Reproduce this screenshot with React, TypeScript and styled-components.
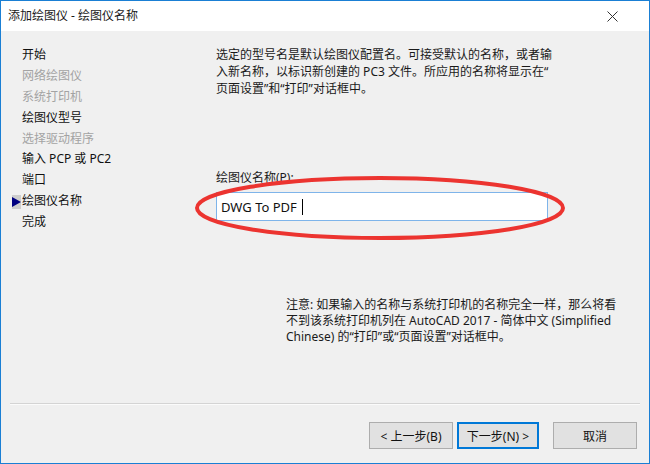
import React from "react";
import styled, { createGlobalStyle } from "styled-components";

const Global = createGlobalStyle`
  html, body { margin: 0; padding: 0; background: #ffffff; }
  #root { width: 650px; height: 464px; }
`;

const FONT = `"Noto Sans", "Noto Sans CJK SC", sans-serif`;

const Window = styled.div`
  position: relative;
  box-sizing: border-box;
  width: 650px;
  height: 464px;
  border: 1px solid #1a7fd4;
  background: #f0f0f0;
  display: flex;
  flex-direction: column;
  font-family: ${FONT};
  font-size: 12px;
  color: #000;
  overflow: hidden;
`;

const TitleBar = styled.div`
  height: 30px;
  background: #ffffff;
  display: flex;
  align-items: center;
  justify-content: space-between;
  padding: 0 31px 0 7px;
  flex-shrink: 0;
`;

const TitleText = styled.span`
  font-size: 12px;
  color: #1a1a1a;
  line-height: 16px;
`;

const CloseIcon = styled.svg`
  width: 11px;
  height: 11px;
  display: block;
`;

const Main = styled.div`
  flex: 1;
  display: flex;
`;

const StepList = styled.ul`
  list-style: none;
  margin: 0;
  padding: 14px 0 0 11px;
  width: 204px;
  box-sizing: border-box;
`;

const Step = styled.li<{ $disabled?: boolean }>`
  display: flex;
  align-items: center;
  height: 20.9px;
  line-height: 20.9px;
  color: ${(p) => (p.$disabled ? "#a3a3a3" : "#111")};
  white-space: nowrap;
`;

const Marker = styled.span<{ $active?: boolean }>`
  width: 9px;
  height: 14px;
  margin-right: 1px;
  display: flex;
  align-items: center;
  background: ${(p) => (p.$active ? "#cdcdcd" : "transparent")};
`;

const Arrow = styled.svg`
  width: 9px;
  height: 10px;
  display: block;
`;

const Content = styled.div`
  flex: 1;
  display: flex;
  flex-direction: column;
  padding: 15px 0 0 11px;
`;

const Description = styled.p`
  margin: 0;
  white-space: nowrap;
  line-height: 17px;
  color: #1a1a1a;
`;

const FieldLabel = styled.label`
  margin-top: 72px;
  line-height: 17px;
  color: #1a1a1a;
`;

const Input = styled.div`
  margin-top: 6px;
  box-sizing: border-box;
  width: 332px;
  height: 29px;
  border: 1px solid #7eb4ea;
  background: #fff;
  display: flex;
  align-items: center;
  padding-left: 4px;
  font-size: 13px;
  color: #111;
`;

const Caret = styled.span`
  display: inline-block;
  width: 1px;
  height: 16px;
  background: #000;
  margin-left: 5px;
`;

const Note = styled.p`
  margin: 76px 0 0 70px;
  width: 336px;
  line-height: 16px;
  color: #1a1a1a;
`;

const Footer = styled.div`
  flex-shrink: 0;
  padding: 0 9px 14px 9px;
`;

const Separator = styled.div`
  height: 1px;
  background: #d4d4d4;
  border-bottom: 1px solid #fbfbfb;
  margin-bottom: 17px;
`;

const ButtonRow = styled.div`
  display: flex;
  justify-content: flex-end;
  gap: 4px;
  padding-right: 3px;
`;

const Button = styled.button<{ $primary?: boolean; $gapLeft?: number }>`
  box-sizing: border-box;
  width: ${(p) => (p.$primary ? 82 : 84)}px;
  height: 27px;
  margin-left: ${(p) => p.$gapLeft ?? 0}px;
  background: #e1e1e1;
  border: ${(p) => (p.$primary ? "2px solid #0078d7" : "1px solid #adadad")};
  font-family: ${FONT};
  font-size: 12px;
  color: #111;
  padding: 0;
  display: flex;
  align-items: center;
  justify-content: center;
`;

const Annotation = styled.svg`
  position: absolute;
  left: 192px;
  top: 173px;
  width: 374px;
  height: 68px;
  pointer-events: none;
`;

const steps: { label: string; disabled?: boolean; active?: boolean }[] = [
  { label: "开始" },
  { label: "网络绘图仪", disabled: true },
  { label: "系统打印机", disabled: true },
  { label: "绘图仪型号" },
  { label: "选择驱动程序", disabled: true },
  { label: "输入 PCP 或 PC2" },
  { label: "端口" },
  { label: "绘图仪名称", active: true },
  { label: "完成" },
];

export default function App() {
  return (
    <>
      <Global />
      <Window>
        <TitleBar>
          <TitleText>添加绘图仪 - 绘图仪名称</TitleText>
          <CloseIcon viewBox="0 0 11 11">
            <path d="M0.5 0.5 L10.5 10.5 M10.5 0.5 L0.5 10.5" stroke="#333" strokeWidth="1" />
          </CloseIcon>
        </TitleBar>
        <Main>
          <StepList>
            {steps.map((s) => (
              <Step key={s.label} $disabled={s.disabled}>
                <Marker $active={s.active}>
                  {s.active && (
                    <Arrow viewBox="0 0 9 10">
                      <path d="M0 0 L9 5 L0 10 Z" fill="#000080" />
                    </Arrow>
                  )}
                </Marker>
                {s.label}
              </Step>
            ))}
          </StepList>
          <Content>
            <Description>
              选定的型号名是默认绘图仪配置名。可接受默认的名称，或者输
              <br />
              入新名称，以标识新创建的 PC3 文件。所应用的名称将显示在“
              <br />
              页面设置”和“打印”对话框中。
            </Description>
            <FieldLabel>绘图仪名称(P):</FieldLabel>
            <Input>
              DWG To PDF
              <Caret />
            </Input>
            <Note>
              注意: 如果输入的名称与系统打印机的名称完全一样，那么将看不到该系统打印机列在 AutoCAD 2017 - 简体中文 (Simplified Chinese) 的“打印”或“页面设置”对话框中。
            </Note>
          </Content>
        </Main>
        <Footer>
          <Separator />
          <ButtonRow>
            <Button>&lt; 上一步(B)</Button>
            <Button $primary>下一步(N) &gt;</Button>
            <Button $gapLeft={10}>取消</Button>
          </ButtonRow>
        </Footer>
        <Annotation viewBox="0 0 374 68">
          <ellipse cx="187" cy="34" rx="183" ry="30" fill="none" stroke="#ec3430" strokeWidth="4" />
        </Annotation>
      </Window>
    </>
  );
}
